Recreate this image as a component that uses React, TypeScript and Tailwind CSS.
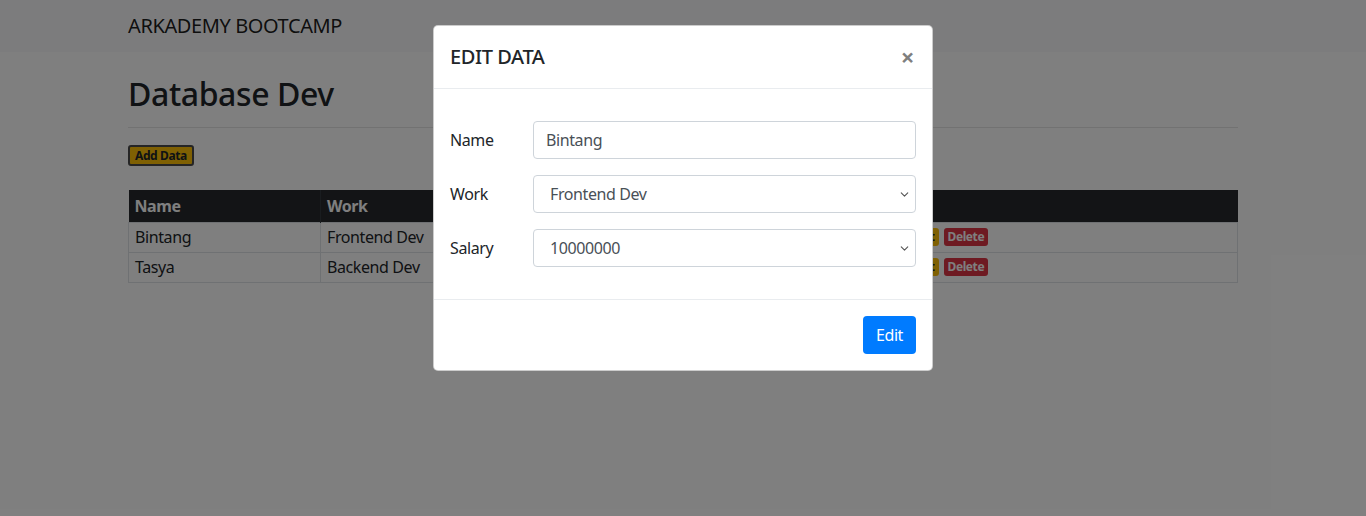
import { ChevronDown } from 'lucide-react';

type Row = { name: string; work: string; salary: string };

const rows: Row[] = [
  { name: 'Bintang', work: 'Frontend Dev', salary: '10000000' },
  { name: 'Tasya', work: 'Backend Dev', salary: '12000000' },
];

function Field({ label, children }: { label: string; children: React.ReactNode }) {
  return (
    <div className="flex items-center">
      <label className="w-[83px] shrink-0 text-[16px] text-[#212529]">{label}</label>
      <div className="flex-1">{children}</div>
    </div>
  );
}

function SelectBox({ value }: { value: string }) {
  return (
    <div className="flex h-[38px] items-center justify-between rounded-[4px] border border-[#ced4da] bg-white pl-4 pr-[4px] text-[16px] text-[#495057]">
      <span>{value}</span>
      <ChevronDown size={13} strokeWidth={2} className="text-[#555]" />
    </div>
  );
}

export default function App() {
  return (
    <div className="relative h-[516px] overflow-hidden bg-white font-['Noto_Sans','Open_Sans',sans-serif] tracking-[-0.025em] text-[#212529]">
      {/* page under the modal */}
      <nav className="h-[52px] bg-[#f8f9fa]">
        <div className="mx-auto flex h-full w-[1110px] items-center">
          <span className="text-[20px] text-black/90">ARKADEMY BOOTCAMP</span>
        </div>
      </nav>

      <div className="mx-auto w-[1110px]">
        <h1 className="pt-[23px] text-[32px] font-medium leading-[38px]">Database Dev</h1>
        <hr className="mt-[14px] border-black/10" />
        <button className="mt-[17px] rounded-[3px] border-2 border-[#4a4a4a] bg-[#ffc107] px-[5px] text-[12px] font-bold leading-[17px] text-[#212529]">
          Add Data
        </button>

        <table className="mt-[24px] w-full border-collapse text-left text-[16px]">
          <thead>
            <tr className="h-[32px] bg-[#26282c] text-white">
              <th className="w-[192px] border-r border-[#32383e] px-[6px] font-bold">Name</th>
              <th className="w-[192px] border-r border-[#32383e] px-[6px] font-bold">Work</th>
              <th className="w-[390px] border-r border-[#32383e] px-[6px] font-bold">Salary</th>
              <th className="px-[6px] font-bold"></th>
            </tr>
          </thead>
          <tbody>
            {rows.map((r) => (
              <tr key={r.name} className="h-[30px]">
                <td className="border border-[#dee2e6] px-[6px]">{r.name}</td>
                <td className="border border-[#dee2e6] px-[6px]">{r.work}</td>
                <td className="border border-[#dee2e6] px-[6px]">{r.salary}</td>
                <td className="border border-[#dee2e6] px-[6px]">
                  <div className="flex gap-[5px]">
                    <span className="rounded-[3px] bg-[#ffc107] px-[4px] text-[12px] font-bold leading-[18px]">Edit</span>
                    <span className="rounded-[3px] bg-[#dc3545] px-[4px] text-[12px] font-bold leading-[18px] text-white">Delete</span>
                  </div>
                </td>
              </tr>
            ))}
          </tbody>
        </table>
      </div>

      {/* backdrop */}
      <div className="absolute inset-0 bg-black/50" />

      {/* modal */}
      <div className="absolute left-[433px] top-[25px] w-[500px] rounded-[5px] border border-black/20 bg-white">
        <div className="flex h-[63px] items-center justify-between border-b border-[#e9ecef] px-4">
          <h5 className="text-[20px] font-medium">EDIT DATA</h5>
          <span className="mr-[2px] text-[24px] font-bold leading-none text-black/50">×</span>
        </div>
        <div className="flex flex-col gap-4 px-4 py-8">
          <Field label="Name">
            <div className="flex h-[38px] items-center rounded-[4px] border border-[#ced4da] px-3 text-[16px] text-[#495057]">
              Bintang
            </div>
          </Field>
          <Field label="Work">
            <SelectBox value="Frontend Dev" />
          </Field>
          <Field label="Salary">
            <SelectBox value="10000000" />
          </Field>
        </div>
        <div className="flex justify-end border-t border-[#e9ecef] p-4">
          <button className="h-[38px] rounded-[4px] bg-[#007bff] px-[13px] text-[16px] text-white">Edit</button>
        </div>
      </div>
    </div>
  );
}
